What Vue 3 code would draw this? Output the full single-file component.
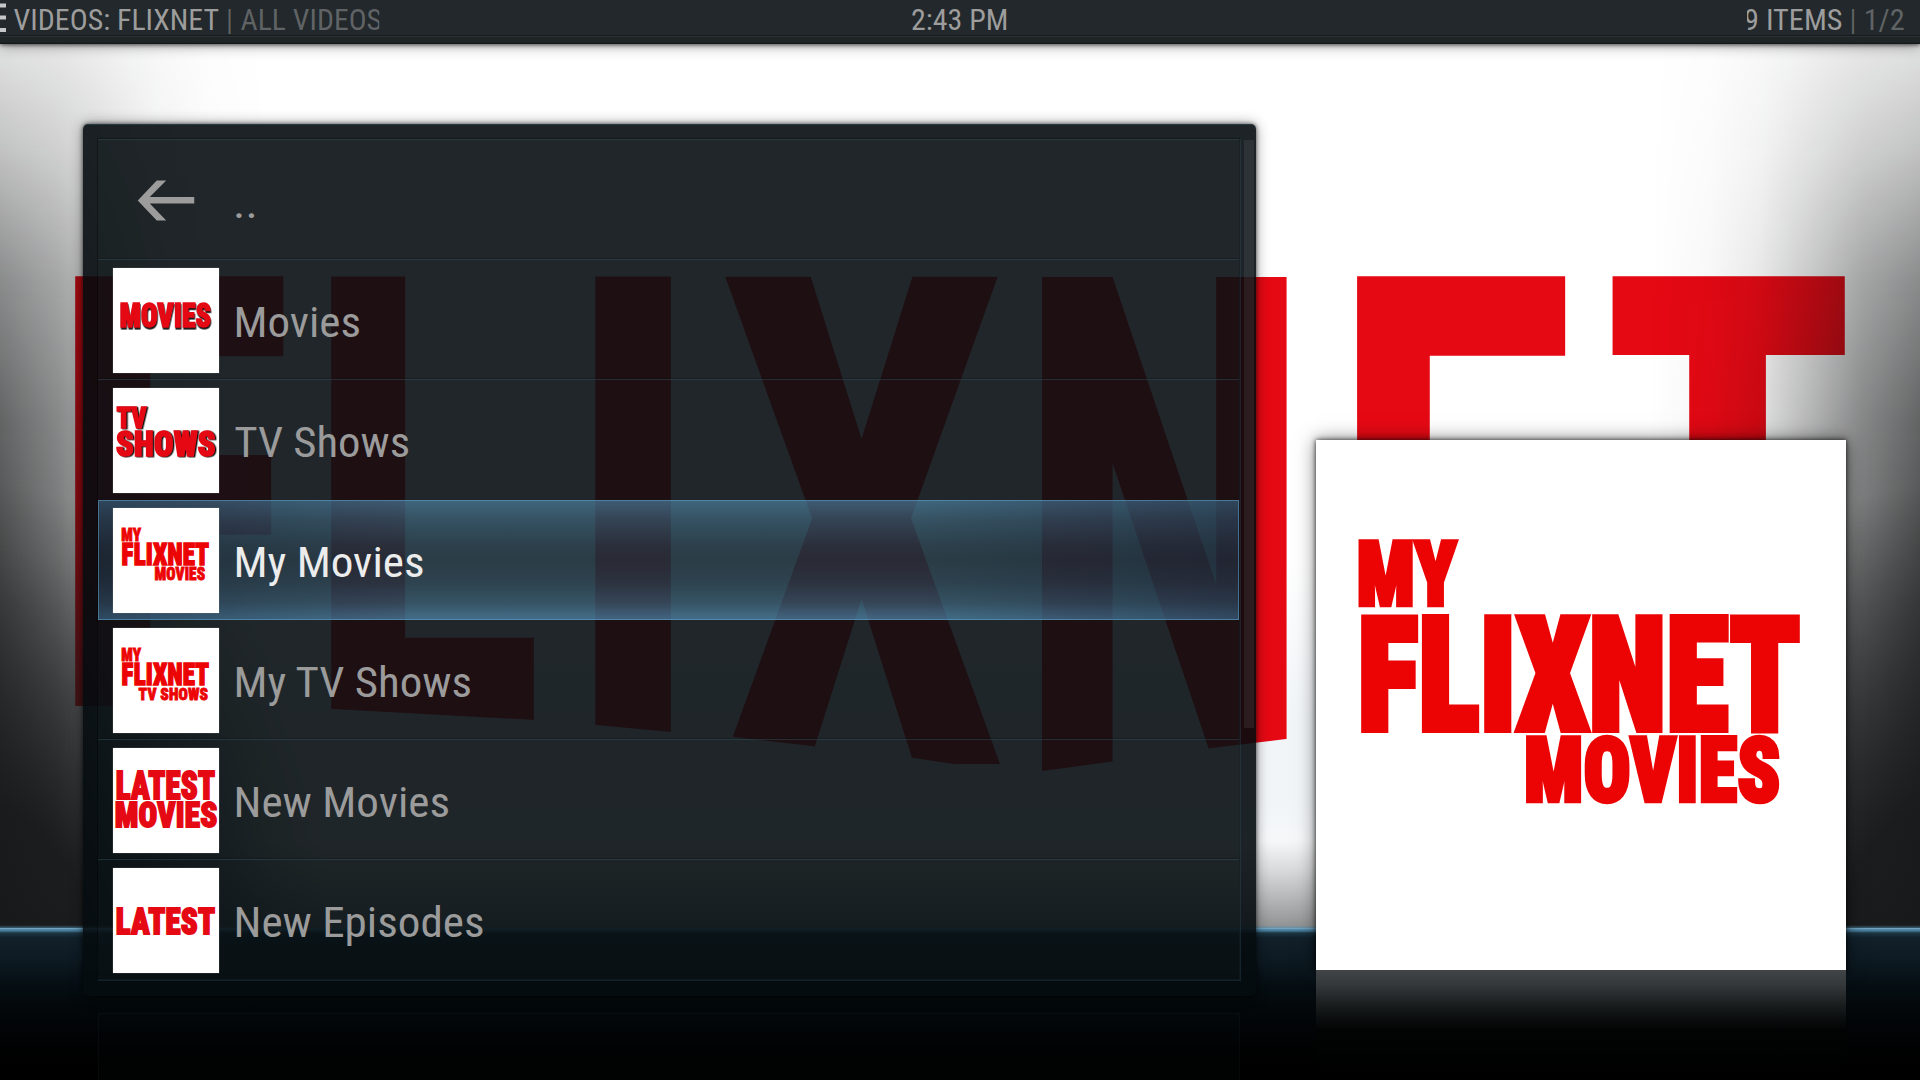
<script setup>
const ctx = document.createElement('canvas').getContext('2d')

const CONDENSED = '"Roboto Condensed", Roboto, "Liberation Sans", sans-serif'
const WIDE = 'Roboto, "Liberation Sans", sans-serif'

// Scales a word so its ink spans x0..x1 and its capitals span top..base.
// Ink is measured at 1000px and converted to the 100px text size.
function fit(word, { x0, x1, top, base, weight = 400, family = CONDENSED, pad = 0, spacing = 0 }) {
  ctx.font = `${weight} 1000px ${family}`
  const m = ctx.measureText(word)
  const cap = ctx.measureText('H').actualBoundingBoxAscent / 10
  const left = m.actualBoundingBoxLeft / 10 + pad
  const right = m.actualBoundingBoxRight / 10 + pad + spacing * (word.length - 1)
  const sx = (x1 - x0) / (left + right)
  const sy = (base - top) / (cap + 2 * pad)
  return `translate(${x0 + left * sx} ${base - pad * sy}) scale(${sx} ${sy})`
}
const label = (word, x0, x1, top, base) => fit(word, { x0, x1, top, base })
const heavy = (w) => fit(w.t, { x0: w.x[0], x1: w.x[1], top: w.y[0], base: w.y[1], weight: 900, pad: 2.5, spacing: 1 })
const wall = (g) => fit(g.t, { x0: g.x[0], x1: g.x[1], top: 271.5, base: g.b, weight: 900, family: g.narrow ? CONDENSED : WIDE })

const wallpaper = [
  { t: 'F', x: [72, 284], b: 706 },
  { t: 'L', x: [328, 537], b: 720 },
  { t: 'I', x: [594, 677], b: 734 },
  { t: 'X', x: [722, 1002], b: 764 },
  { t: 'N', x: [1039, 1290], b: 771 },
  { t: 'E', x: [1354, 1566], b: 704 },
  { t: 'T', x: [1609, 1845], b: 700, narrow: true },
]

const myMovies = {
  color: '#ec0404',
  words: [
    { t: 'MY', x: [42.5, 142], y: [99, 167.5] },
    { t: 'FLIXNET', x: [45, 484], y: [172.5, 292.5] },
    { t: 'MOVIES', x: [210, 463.5], y: [294.5, 363.5] },
  ],
}
const items = [
  { name: 'Movies', end: 359.5, color: '#e50914', depth: 'drop-shadow(3px 9px 0 #111)', words: [{ t: 'MOVIES', x: [36, 492], y: [173, 300] }] },
  { name: 'TV Shows', start: 235, end: 408.6, color: '#e50914', depth: 'drop-shadow(7px 3px 0 #111)',
    words: [{ t: 'TV', x: [15, 172], y: [90, 208] }, { t: 'SHOWS', x: [15, 515], y: [215, 349] }] },
  { name: 'My Movies', end: 423, focused: true, ...myMovies },
  { name: 'My TV Shows', end: 471.5, color: '#ec0404',
    words: [...myMovies.words.slice(0, 2), { t: 'TV SHOWS', x: [127, 478], y: [299, 365] }] },
  { name: 'New Movies', end: 448.5, color: '#e50914',
    words: [{ t: 'LATEST', x: [16, 514], y: [113, 261] }, { t: 'MOVIES', x: [11, 524], y: [268, 405] }] },
  { name: 'New Episodes', end: 483, color: '#e50914', words: [{ t: 'LATEST', x: [16, 514], y: [190, 336] }] },
]
</script>

<template>
  <div class="stage">
    <div class="wall">
      <svg class="wall-logo" viewBox="0 0 1920 1080">
        <defs>
          <clipPath id="arc">
            <path d="M0 0H1920V650L1286 739 1204 749 1043 771H1000L914 758 726 736 671 732 596 725 535 720 332 709 284 706H0Z" />
          </clipPath>
        </defs>
        <g clip-path="url(#arc)">
          <text v-for="g in wallpaper" :key="g.t" class="wall-letter" :class="{ narrow: g.narrow }" :transform="wall(g)">{{ g.t }}</text>
        </g>
      </svg>
      <div class="shade sides"></div>
      <div class="shade low"></div>
      <div class="floor"></div>
    </div>

    <header class="bar">
      <svg width="640" height="44">
        <path d="M0 3.5H6V7.5H0zM0 15.5H6V19.5H0zM0 28H6V32H0z" fill="#c4c6c7" />
        <text class="strong" :transform="label('VIDEOS: FLIXNET', 14, 218.5, 7.9, 29.7)">VIDEOS: FLIXNET</text>
        <text class="dim" :transform="label('|', 228.3, 230.8, 7.9, 29.7)">|</text>
        <svg width="379.3" height="44">
          <text class="dim" :transform="label('ALL VIDEOS', 241, 381, 7.9, 29.7)">ALL VIDEOS</text>
        </svg>
      </svg>
      <svg width="640" height="44">
        <text class="strong" :transform="label('2:43 PM', 272, 366.3, 7.9, 29.7)">2:43 PM</text>
      </svg>
      <svg width="640" height="44">
        <svg x="467" width="100" height="44">
          <text class="strong" :transform="label('9 ITEMS', -1.5, 94.5, 7.9, 29.7)">9 ITEMS</text>
        </svg>
        <text class="dim" :transform="label('|', 571.8, 574.3, 7.9, 29.7)">|</text>
        <text class="dim" :transform="label('1/2', 586, 624, 7.9, 29.7)">1/2</text>
      </svg>
    </header>

    <main class="content">
      <section class="panel">
        <ul class="list">
          <li class="row">
            <svg class="back" viewBox="0 0 105 105">
              <path d="M24.5 53.5 43.5 33.5H53L36.5 50H81V56.5H36.5L53 73.5H43.5Z" />
            </svg>
            <svg class="caption" width="1020" height="120">
              <text :transform="label('..', 17, 35.2, 47.2, 78.5)">..</text>
            </svg>
          </li>
          <li v-for="it in items" :key="it.name" class="row" :class="{ focused: it.focused }">
            <svg class="thumb" viewBox="0 0 530 530">
              <g :style="{ fill: it.color, stroke: it.color, filter: it.depth }">
                <text v-for="w in it.words" :key="w.t" class="heavy" :transform="heavy(w)">{{ w.t }}</text>
              </g>
            </svg>
            <svg class="caption" width="1020" height="120">
              <text :transform="label(it.name, (it.start || 236.3) - 219, it.end - 219, 47.2, 78.2)">{{ it.name }}</text>
            </svg>
          </li>
        </ul>
        <div class="track"><div class="grip"></div></div>
        <div class="panel-mirror"></div>
      </section>

      <aside class="poster">
        <svg viewBox="0 0 530 530">
          <g :style="{ fill: myMovies.color, stroke: myMovies.color }">
            <text v-for="w in myMovies.words" :key="w.t" class="heavy" :transform="heavy(w)">{{ w.t }}</text>
          </g>
        </svg>
        <div class="poster-mirror"></div>
      </aside>
    </main>
  </div>
</template>

<style>
body { margin: 0; background: #000; }
</style>

<style scoped>
.stage { position: relative; width: 1920px; height: 1080px; overflow: hidden; background: #fff; }
svg { display: block; }
text { font: 400 100px "Roboto Condensed", Roboto, "Liberation Sans", sans-serif; fill: #9b9b9b; }

.wall { position: absolute; inset: 0; background: linear-gradient(#fff 0 560px, #f1f5f8 720px 800px, #f6f8f9 845px); }
.wall-logo { position: absolute; inset: 0; }
.wall-letter { font: 900 100px Roboto, "Liberation Sans", sans-serif; fill: #e50914; }
.wall-letter.narrow { font-family: "Roboto Condensed", Roboto, "Liberation Sans", sans-serif; }
.shade { position: absolute; inset: 0 0 152px; }
.sides {
  background:
    linear-gradient(90deg, rgb(10,12,13) 0, rgba(10,12,13,.76) 60px, rgba(10,12,13,.5) 105px, rgba(10,12,13,.2) 160px, rgba(10,12,13,.06) 210px, transparent 270px),
    linear-gradient(270deg, rgb(10,12,13) 0, rgba(10,12,13,.76) 60px, rgba(10,12,13,.5) 105px, rgba(10,12,13,.2) 160px, rgba(10,12,13,.06) 210px, transparent 270px);
  mask-image: linear-gradient(rgba(0,0,0,.12) 44px, rgba(0,0,0,.25) 150px, rgba(0,0,0,.48) 280px, rgba(0,0,0,.64) 420px, rgba(0,0,0,.76) 600px, rgba(0,0,0,.86) 850px);
}
.low {
  background:
    radial-gradient(ellipse 330px 440px at 0 928px, rgba(24,25,26,.94) 25%, rgba(26,28,29,.55) 58%, rgba(26,28,29,.15) 85%, rgba(26,28,29,0)),
    radial-gradient(ellipse 290px 440px at 1920px 928px, rgba(24,25,26,.94) 25%, rgba(26,28,29,.55) 60%, rgba(26,28,29,0)),
    linear-gradient(transparent 840px, rgba(0,0,0,.12) 870px, rgba(0,0,0,.4) 925px);
}
.floor {
  position: absolute; inset: 925px 0 0;
  background: linear-gradient(rgba(79,140,172,0) 0, rgba(79,140,172,.6) 3px, #5590b2 4px, #437591 6px, #1b3542 8px, #11202a 13px, #0e1b24 32px, #071016 55px, #03080a 80px, #010304 110px, #000 140px);
}

.bar {
  position: relative; display: flex; height: 44px; z-index: 2;
  background: linear-gradient(#22282b 0 35px, #171b1d 35px 36px, #293235 36px 37px, #1f2426 37px 42px, #121515 44px);
  box-shadow: 0 1px 4px rgba(0,0,0,.6), 0 2px 14px rgba(0,0,0,.35);
}
text.strong { fill: #9d9d9d; }
text.dim { fill: #606365; }

.content { position: relative; display: flex; padding: 80px 0 0 83px; align-items: flex-start; }
.panel {
  position: relative; box-sizing: border-box; display: flex; width: 1172.5px; height: 872px; padding: 15px 2px 16px 15px;
  background: rgba(6,12,15,.905); border-radius: 5px;
  box-shadow: 0 0 4px rgba(0,0,0,.65), 0 0 14px rgba(0,0,0,.4), inset 0 1px 0 rgba(50,80,95,.5);
}
.list {
  list-style: none; margin: 0; padding: 0; width: 1141px; height: 840px;
  background: rgba(120,150,165,.03);
  box-shadow: 0 0 0 1px rgba(0,0,0,.3), inset 0 1px 0 rgba(70,100,112,.3), 1px 1px 0 1px rgba(50,80,95,.35);
}
.row { box-sizing: border-box; display: flex; align-items: flex-start; height: 120px; padding-left: 15px; }
.row + .row { box-shadow: 0 -1px 0 rgba(0,0,0,.2), inset 0 1px 0 rgba(55,90,105,.4); }
.back, .thumb { flex: none; width: 105.5px; height: 105px; margin: 9px .5px 0 0; }
.back { fill: #9c9c9c; margin-top: 8px; }
.thumb { background: #fff; box-shadow: 0 0 1px #888; }
.caption { flex: none; }
text.heavy { font-weight: 900; fill: inherit; stroke-width: 5; letter-spacing: 1px; }
.row.focused {
  position: relative; height: 120px; margin-top: 1px; margin-bottom: -1px; z-index: 1;
  box-shadow: inset 0 0 0 1px rgba(90,150,190,.6);
  background:
    linear-gradient(90deg, rgba(20,28,45,.35), transparent 28% 72%, rgba(20,28,45,.35)),
    linear-gradient(rgba(90,155,195,.55) 0, rgba(88,152,190,.38) 20px, rgba(84,150,188,.24) 45px, rgba(84,150,188,.2) 60px, rgba(84,150,188,.26) 82px, rgba(88,152,190,.4) 103px, rgba(92,160,205,.6) 120px);
}
.focused .thumb { margin-top: 8px; }
.focused .caption { margin-top: -1px; }
.focused .caption text { fill: #ececec; }
.track { width: 10px; margin-left: 4.5px; }
.grip { height: 588px; margin-top: 1px; background: rgba(255,255,255,.07); }
.panel-mirror {
  position: absolute; left: 15px; top: 889px; width: 1142px; height: 70px;
  border: 1px solid rgba(60,90,110,.09); border-bottom: 0; box-sizing: border-box;
  background: rgba(20,40,55,.04);
}

.poster { position: relative; width: 530px; height: 530px; margin: 316px 0 0 60.5px; background: #fff; box-shadow: 0 0 5px rgba(0,0,0,.8), 0 0 18px rgba(0,0,0,.5); }
.poster-mirror {
  position: absolute; left: 0; top: 530px; width: 530px; height: 110px;
  background: linear-gradient(#414547 0, #34383a 15px, #1e2122 32px, #0b0e0f 48px, #020404 60px, #000 100px);
}
</style>
